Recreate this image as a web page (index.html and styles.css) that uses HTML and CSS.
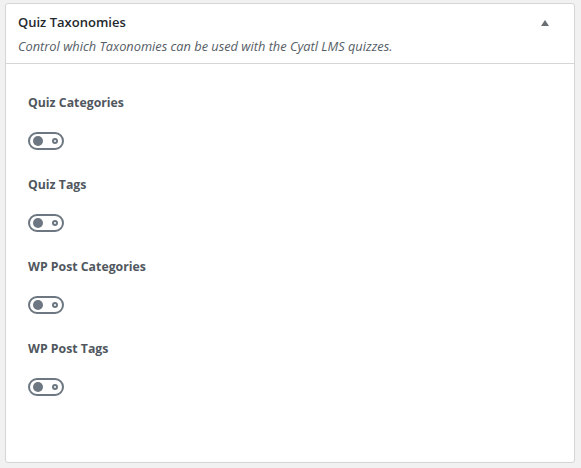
FILE: index.html
```html
<!DOCTYPE html>
<html>
<head>
<meta charset="utf-8">
<link rel="stylesheet" href="styles.css">
</head>
<body>
<div class="card">
  <div class="card-header">
    <div class="header-top">
      <h2 class="title">Quiz Taxonomies</h2>
      <span class="arrow"></span>
    </div>
    <p class="desc">Control which Taxonomies can be used with the Cyatl LMS quizzes.</p>
  </div>
  <div class="card-body">
    <div class="field">
      <div class="label">Quiz Categories</div>
      <span class="toggle"><span class="knob"></span><span class="ring"></span></span>
    </div>
    <div class="field">
      <div class="label">Quiz Tags</div>
      <span class="toggle"><span class="knob"></span><span class="ring"></span></span>
    </div>
    <div class="field">
      <div class="label">WP Post Categories</div>
      <span class="toggle"><span class="knob"></span><span class="ring"></span></span>
    </div>
    <div class="field">
      <div class="label">WP Post Tags</div>
      <span class="toggle"><span class="knob"></span><span class="ring"></span></span>
    </div>
  </div>
</div>
</body>
</html>
```
FILE: styles.css
```css
html, body {
  margin: 0;
  padding: 0;
  background: #f1f1f1;
}
body {
  padding: 3px 6px 5px 5px;
  font-family: "Open Sans", "Noto Sans", sans-serif;
}
.card {
  box-sizing: border-box;
  width: 570px;
  height: 460px;
  background: #fff;
  border: 1px solid #d5d5d5;
  border-radius: 3px;
  display: flex;
  flex-direction: column;
}
.card-header {
  border-bottom: 1px solid #d5d5d5;
  padding: 8px 12px 0 12px;
  height: 60px;
  box-sizing: border-box;
}
.header-top {
  display: flex;
  align-items: center;
  justify-content: space-between;
}
.title {
  margin: 0;
  font-size: 13px;
  font-weight: 600;
  color: #23282d;
  line-height: 20px;
}
.arrow {
  width: 0;
  height: 0;
  border-left: 4px solid transparent;
  border-right: 4px solid transparent;
  border-bottom: 6px solid #6a6f74;
  margin-right: 13px;
  margin-top: 1px;
}
.desc {
  margin: 5px 0 0 0;
  font-size: 12.8px;
  font-style: italic;
  color: #555d66;
  line-height: 18px;
}
.card-body {
  padding: 29px 22px 0 22px;
  display: flex;
  flex-direction: column;
  gap: 25px;
}
.field {
  display: flex;
  flex-direction: column;
  gap: 19px;
}
.label {
  font-size: 12.3px;
  font-weight: 700;
  color: #50575e;
  line-height: 20px;
}
.toggle {
  box-sizing: border-box;
  width: 36px;
  height: 18px;
  border: 2px solid #6c7781;
  border-radius: 9px;
  display: flex;
  align-items: center;
  justify-content: space-between;
  padding: 0 4px 0 3px;
}
.knob {
  width: 10px;
  height: 10px;
  border-radius: 50%;
  background: #6c7781;
}
.ring {
  box-sizing: border-box;
  width: 6px;
  height: 6px;
  border-radius: 50%;
  border: 2px solid #6c7781;
}
```
